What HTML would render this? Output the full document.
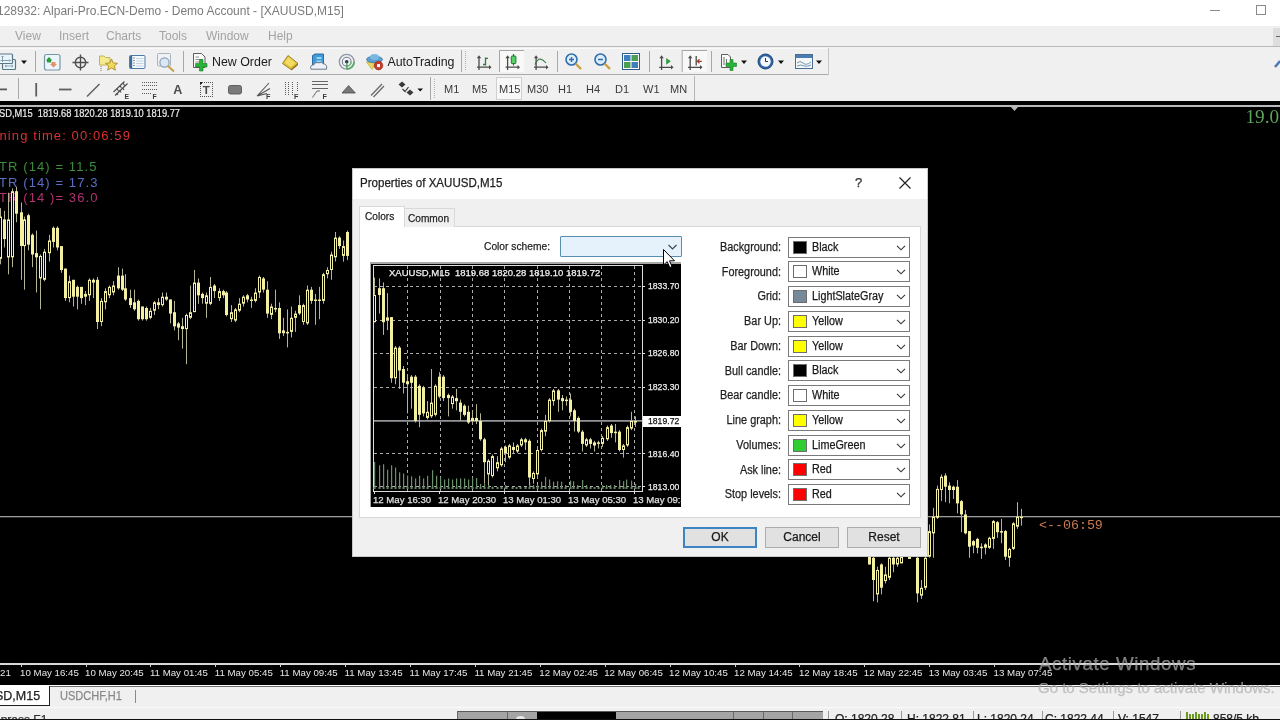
<!DOCTYPE html>
<html><head><meta charset="utf-8">
<style>
*{margin:0;padding:0;box-sizing:border-box}
html,body{width:1280px;height:720px;overflow:hidden;background:#f0f0f0;font-family:"Liberation Sans",sans-serif}
.a{position:absolute}
#root div{-webkit-text-stroke:0.25px currentColor}
#chart div,#root .mi,#root .tf,#title div{-webkit-text-stroke:0}
#chart .hdr{-webkit-text-stroke:0.2px currentColor}
.t{position:absolute;white-space:pre;line-height:1}
#title{left:0;top:0;width:1280px;height:26px;background:#fff}
#menu{left:0;top:26px;width:1280px;height:21px;background:#f0f0f0;border-bottom:1px solid #b8b8b8}
.mi{position:absolute;top:30px;font-size:12px;color:#a3a3a3;white-space:pre;line-height:1}
#tb1{left:0;top:47px;width:1280px;height:28px;background:#f0f0f0}
#tb2{left:0;top:75px;width:1280px;height:26px;background:#f0f0f0}
.sep{position:absolute;width:1px;background:#a5a5a5}
.ic{position:absolute}
.tf{position:absolute;top:84px;font-size:11px;color:#3a3a3a;white-space:pre;line-height:1}
#chart{left:0;top:101px;width:1280px;height:584px;background:#000;overflow:hidden}
.tk{position:absolute;top:562px;width:1px;height:4px;background:#d0d0d0}
.tl{position:absolute;top:567px;font-size:9.7px;color:#e6e6e6;white-space:pre;line-height:1}
#dlg{left:352px;top:168px;width:576px;height:389px;background:#f0f0f0;border:1px solid #c8c8c8}
.lbl{position:absolute;font-size:12.5px;color:#1e1e1e;white-space:pre;line-height:1;text-align:right;transform:scaleX(0.87);transform-origin:100% 0}
.dd{position:absolute;left:788px;width:122px;height:21px;background:#fff;border:1px solid #7a7a7a}
.sw{position:absolute;left:4px;top:3px;width:13.5px;height:13px;border:1px solid #6e6e6e}
.ddt{position:absolute;left:22.5px;top:3.3px;font-size:12px;color:#1a1a1a;white-space:pre;line-height:1;transform:scaleX(0.9);transform-origin:0 0}
.chev{position:absolute;right:3.5px;top:7px}
.btn{position:absolute;top:527px;width:74px;height:21px;background:#e1e1e1;border:1px solid #adadad;font-size:12px;color:#1a1a1a;text-align:center;line-height:19px}
.pl{position:absolute;left:648px;font-size:9.3px;color:#ededed;white-space:pre;line-height:1;transform:scaleX(0.93);transform-origin:0 0}
.ptl{position:absolute;top:495px;font-size:9.6px;color:#e0e0e0;white-space:pre;line-height:1}
</style></head><body><div id="root" style="position:absolute;left:0;top:0;width:1280px;height:720px;overflow:hidden;will-change:transform">
<!-- title bar -->
<div id="title" class="a">
  <div class="t" style="left:-3px;top:5px;font-size:12px;color:#7b7b7b">128932: Alpari-Pro.ECN-Demo - Demo Account - [XAUUSD,M15]</div>
  <div class="a" style="left:1210px;top:10px;width:10px;height:1px;background:#8a8a8a"></div>
  <div class="a" style="left:1256px;top:5px;width:10px;height:10px;border:1px solid #8a8a8a"></div>
</div>
<!-- menu -->
<div id="menu" class="a"></div>
<div class="mi" style="left:15px">View</div>
<div class="mi" style="left:59px">Insert</div>
<div class="mi" style="left:106px">Charts</div>
<div class="mi" style="left:159px">Tools</div>
<div class="mi" style="left:206px">Window</div>
<div class="mi" style="left:268px">Help</div>
<div class="a" style="left:1273px;top:28px;width:7px;height:18px;background:#dedede"></div>
<div class="a" style="left:1276px;top:36px;width:4px;height:1px;background:#666"></div>
<!-- toolbars -->
<div id="tb1" class="a"></div>
<div id="tb2" class="a"></div>
<div class="a" style="left:0;top:48px;width:828px;height:1px;background:#fafafa"></div>
<div class="a" style="left:0;top:74px;width:828px;height:1px;background:#a9a9a9"></div>
<div class="a" style="left:828px;top:48px;width:1px;height:27px;background:#c4c4c4"></div>
<div class="a" style="left:694px;top:76px;width:1px;height:25px;background:#b5b5b5"></div>
<svg class="a" style="left:0;top:0" width="1280" height="101" viewBox="0 0 1280 101">
<!-- separators tb1 -->
<g fill="#a8a8a8">
<rect x="35" y="51" width="1" height="21"/><rect x="183" y="51" width="1" height="21"/><rect x="461" y="50" width="1" height="22"/>
<rect x="557" y="51" width="1" height="21"/><rect x="649" y="51" width="1" height="21"/><rect x="711" y="51" width="1" height="21"/>
<rect x="18" y="78" width="1" height="21"/><rect x="430" y="77" width="1" height="23"/>
</g>
<g fill="#b0b0b0">
<rect x="465" y="51" width="1" height="1"/><rect x="465" y="53" width="1" height="1"/><rect x="465" y="55" width="1" height="1"/><rect x="465" y="57" width="1" height="1"/><rect x="465" y="59" width="1" height="1"/><rect x="465" y="61" width="1" height="1"/><rect x="465" y="63" width="1" height="1"/><rect x="465" y="65" width="1" height="1"/><rect x="465" y="67" width="1" height="1"/><rect x="465" y="69" width="1" height="1"/>
<rect x="434" y="79" width="1" height="1"/><rect x="434" y="81" width="1" height="1"/><rect x="434" y="83" width="1" height="1"/><rect x="434" y="85" width="1" height="1"/><rect x="434" y="87" width="1" height="1"/><rect x="434" y="89" width="1" height="1"/><rect x="434" y="91" width="1" height="1"/><rect x="434" y="93" width="1" height="1"/><rect x="434" y="95" width="1" height="1"/><rect x="434" y="97" width="1" height="1"/>
</g>
<!-- 1: windows icon (partial) -->
<rect x="2.5" y="59.5" width="13" height="10" rx="1" fill="#e6f4fa" stroke="#5a7686" stroke-width="1.2"/>
<path d="M5 66 H13 M5 66 L6.5 65 M5 66 L6.5 67 M13 66 L11.5 65 M13 66 L11.5 67" stroke="#7a96a6" stroke-width="0.8" fill="none"/>
<rect x="-3" y="54" width="15.5" height="9.5" rx="1" fill="#e8f6fc" stroke="#5a7686" stroke-width="1.2"/>
<path d="M2.5 56 V62 M0.5 60.5 H10.5 M1.5 57 L2.5 56 L3.5 57 M9.5 59.5 L10.5 60.5 L9.5 61.5" stroke="#7a96a6" stroke-width="0.9" fill="none"/>
<path d="M21 60.5 H27 L24 64 Z" fill="#111"/>
<!-- 2: green/orange box -->
<rect x="44.5" y="54.5" width="15.5" height="15.5" rx="2" fill="#eaf6fb" stroke="#7a96ab" stroke-width="1.2"/>
<path d="M49 57 L52.5 60.5 L51 60.5 L51 62.5 L47 62.5 L47 60.5 L45.8 60.5 Z" fill="#2f9a3a"/>
<path d="M51.5 62 L55.5 62 L55.5 64 L57 64 L53.5 67.5 L50 64 L51.5 64 Z" fill="#e8906e"/>
<!-- 3: crosshair -->
<g stroke="#4e4e4e" stroke-width="1.4" fill="none"><circle cx="80.5" cy="62.5" r="5.2"/><path d="M80.5 54.5 V70.5 M72.5 62.5 H88.5"/></g>
<!-- 4: folder star -->
<path d="M99.5 56 H104 L105.5 57.5 H110 V65 H99.5 Z" fill="#f4ea90" stroke="#c6b25a" stroke-width="1"/>
<path d="M111.5 59 L113.3 63 L117.5 63.3 L114.3 66 L115.4 70.2 L111.5 67.9 L107.6 70.2 L108.7 66 L105.5 63.3 L109.7 63 Z" fill="#f2d95a" stroke="#a88a2a" stroke-width="0.9"/>
<path d="M101 66 V71" stroke="#777" stroke-width="1" stroke-dasharray="1,1"/>
<!-- 5: list window -->
<rect x="129.5" y="55.5" width="15.5" height="13" rx="1" fill="#f4f9fd" stroke="#4f7aa6" stroke-width="1"/>
<rect x="130" y="56" width="2.2" height="12.5" fill="#3f6a9a"/>
<path d="M133.5 58 H134.5 M133.5 60.5 H134.5 M133.5 63 H134.5 M133.5 65.5 H134.5" stroke="#333" stroke-width="1"/>
<path d="M136 58.5 H143.5 M136 61 H143.5 M136 63.5 H143.5 M136 66 H143.5" stroke="#b6c8da" stroke-width="0.8"/>
<!-- 6: mag -->
<rect x="157.5" y="53.5" width="13" height="12.5" rx="1" fill="#eef2f6" stroke="#aab4bc" stroke-width="1"/>
<circle cx="164.5" cy="62.5" r="4.6" fill="#dbe8f2" stroke="#8aa0b6" stroke-width="1.2"/>
<path d="M168 66 L174 71.5" stroke="#c9a04a" stroke-width="2"/>
<!-- 7: new order -->
<path d="M193.5 53.5 H201.5 L205 57 V67.5 H193.5 Z" fill="#fafafa" stroke="#5d5d5d" stroke-width="1"/>
<path d="M195.5 57 H199 M195.5 59.5 H203 M195.5 62 H201" stroke="#777" stroke-width="0.8"/>
<path d="M195.5 63.5 H199.5 V59.5 H203 V63.5 H207 V67 H203 V71 H199.5 V67 H195.5 Z" fill="#2ab33a" stroke="#1b7a25" stroke-width="0.6"/>
<text x="212" y="65.5" font-family="Liberation Sans" font-size="12.4" fill="#1b1b1b">New Order</text>
<!-- 8: eraser -->
<path d="M282.5 63.5 L288 55.5 L298 63.5 L291 69.5 Z" fill="#e2c23a" stroke="#9a7418" stroke-width="0.9"/>
<path d="M284.5 62.5 L288.3 57 L295.5 62.8 L290.8 67 Z" fill="#f2dc64"/>
<path d="M291 69.5 L298 63.5 L298 65 L291.5 70.5 Z" fill="#8a6a18"/>
<!-- 9: server cloud -->
<path d="M312.5 55.5 L315 54 H323.5 V64.5 H312.5 Z" fill="#3f9ad8" stroke="#24609a" stroke-width="0.9"/>
<rect x="316.5" y="57" width="5" height="2" fill="#9ad2f2"/><rect x="316.5" y="60.5" width="5" height="2" fill="#9ad2f2"/>
<path d="M311 69.2 Q309.5 65 313.5 65 Q315 61.8 319 62.8 Q321.5 61.5 323.5 63.8 Q327.5 64 326.5 69.2 Z" fill="#eef2f8" stroke="#5a6a7c" stroke-width="0.9"/>
<!-- 10: signal -->
<g fill="none"><circle cx="346.7" cy="61.7" r="7.4" stroke="#8c98aa" stroke-width="1.3"/><circle cx="346.7" cy="61.7" r="4.4" stroke="#7a8698" stroke-width="1.1"/>
<path d="M354.1 61.7 A7.4 7.4 0 0 1 346.7 69.1" stroke="#5aaa68" stroke-width="1.8"/><path d="M351.1 61.7 A4.4 4.4 0 0 1 346.7 66.1" stroke="#6aba78" stroke-width="1.3"/></g>
<circle cx="346.7" cy="61.7" r="1.8" fill="#2a3a50"/>
<path d="M346.9 62.5 V69" stroke="#4a9a58" stroke-width="1.3"/>
<!-- 11: autotrading -->
<path d="M366.5 62 L376 62 L372 69.5 Z" fill="#e8d860" stroke="#b0a030" stroke-width="0.6"/>
<ellipse cx="374.5" cy="59.5" rx="8" ry="3.3" fill="#5a9ed2" stroke="#3a6a9a" stroke-width="0.7"/>
<ellipse cx="374.5" cy="57" rx="4.5" ry="3" fill="#7ab8e4"/>
<circle cx="378.5" cy="65.6" r="4.3" fill="#c83a28" stroke="#8a2a1a" stroke-width="0.6"/>
<rect x="377" y="64.1" width="3" height="3" fill="#fff"/>
<text x="387.4" y="65.5" font-family="Liberation Sans" font-size="12.4" fill="#1b1b1b">AutoTrading</text>
<!-- 12: bar chart -->
<g stroke="#4a4a4a" stroke-width="1.3" fill="none"><path d="M479 57 V70 M477 67.2 H489.5"/></g>
<path d="M476.8 58.2 L479 55.3 L481.2 58.2 Z M489 65 L491.5 67.2 L489 69.4 Z" fill="#4a4a4a"/>
<path d="M485.5 57.5 V65.5 M485.5 58.3 H488 M483 64.5 H485.5" stroke="#2e7a3a" stroke-width="1.3" fill="none"/>
<!-- 13: candles pressed -->
<rect x="499" y="50" width="25" height="22" fill="#f8f8f8"/>
<path d="M499.5 72 V50.5 H524" stroke="#a5a5a5" stroke-width="1" fill="none"/>
<g stroke="#4a4a4a" stroke-width="1.3" fill="none"><path d="M507.6 57 V70 M505.6 67.2 H518"/></g>
<path d="M505.4 58.2 L507.6 55.3 L509.8 58.2 Z M517.5 65 L520 67.2 L517.5 69.4 Z" fill="#4a4a4a"/>
<path d="M513.5 54 V65.5" stroke="#1f7a2a" stroke-width="1.2"/>
<rect x="511.3" y="56" width="4.6" height="7.6" rx="0.8" fill="#5ad06a" stroke="#1f7a2a" stroke-width="1"/>
<!-- 14: line chart -->
<g stroke="#4a4a4a" stroke-width="1.3" fill="none"><path d="M536.1 57 V70 M534 67.2 H546.5"/></g>
<path d="M533.9 58.2 L536.1 55.3 L538.3 58.2 Z M546 65 L548.5 67.2 L546 69.4 Z" fill="#4a4a4a"/>
<path d="M535 64.5 Q537.5 59 540.3 59 Q543 59.5 546 63" stroke="#2e7a3a" stroke-width="1.1" fill="none"/>
<!-- 15: zoom in -->
<circle cx="571.5" cy="59.5" r="5.5" fill="#dcecf8" stroke="#2f6fae" stroke-width="1.6"/>
<path d="M569 59.5 H574 M571.5 57 V62" stroke="#2f6fae" stroke-width="1.5"/>
<path d="M575.5 63.5 L581 69" stroke="#c8a040" stroke-width="2.4"/>
<!-- 16: zoom out -->
<circle cx="600.5" cy="59.5" r="5.5" fill="#dcecf8" stroke="#2f6fae" stroke-width="1.6"/>
<path d="M598 59.5 H603" stroke="#2f6fae" stroke-width="1.5"/>
<path d="M604.5 63.5 L610 69" stroke="#c8a040" stroke-width="2.4"/>
<!-- 17: tile -->
<rect x="622.5" y="53.5" width="17" height="16" fill="#fff" stroke="#2e5a86" stroke-width="1"/>
<rect x="624" y="55" width="6.5" height="6" fill="#3f7fc0"/><rect x="631.5" y="55" width="6.5" height="6" fill="#48a050"/>
<rect x="624" y="62" width="6.5" height="6" fill="#48a050"/><rect x="631.5" y="62" width="6.5" height="6" fill="#3f7fc0"/>
<!-- 18: chart shift -->
<g stroke="#4a4a4a" stroke-width="1.3" fill="none"><path d="M661.6 57 V70 M659.2 67.3 H671.5"/></g>
<path d="M659.4 58.2 L661.6 55.3 L663.8 58.2 Z M671 65.1 L673.5 67.3 L671 69.5 Z" fill="#4a4a4a"/>
<path d="M666.2 57.9 L670.8 61.3 L666.2 64.7 Z" fill="#2e9a3e"/>
<!-- 19: autoscroll pressed -->
<rect x="682" y="50" width="25" height="22" fill="#f8f8f8"/>
<path d="M682.2 72 V50.5 H707" stroke="#a5a5a5" stroke-width="1" fill="none"/>
<g stroke="#4a4a4a" stroke-width="1.3" fill="none"><path d="M690.2 57 V70 M688 67.3 H700.5 M696.2 56 V65.6"/></g>
<path d="M688 58.2 L690.2 55.3 L692.4 58.2 Z M700 65.1 L702.5 67.3 L700 69.5 Z" fill="#4a4a4a"/>
<path d="M701.8 61.3 H697.5 M699.5 59.3 L697.3 61.3 L699.5 63.3" stroke="#a83a2a" stroke-width="1.2" fill="none"/>
<!-- 20: add indicator -->
<path d="M721.5 54.5 H728 L730.5 57 V67.5 H721.5 Z" fill="#fafafa" stroke="#5d5d5d" stroke-width="1"/>
<path d="M724 57 V65 M726.5 59 V65" stroke="#5d5d5d" stroke-width="0.9"/>
<path d="M726 63 H730 V59.5 H733 V63 H736.5 V66.5 H733 V70.5 H730 V66.5 H726 Z" fill="#2ab33a" stroke="#1b7a25" stroke-width="0.6"/>
<path d="M741 60.5 H747 L744 64 Z" fill="#111"/>
<!-- 21: clock -->
<circle cx="765.5" cy="61.5" r="7.5" fill="#2f64a8" stroke="#1e4474" stroke-width="1"/>
<circle cx="765.5" cy="61.5" r="5.2" fill="#f4f8fc"/>
<path d="M765.5 58 V61.5 H768" stroke="#333" stroke-width="1" fill="none"/>
<path d="M778 60.5 H784 L781 64 Z" fill="#111"/>
<!-- 22: template -->
<rect x="795.5" y="54.5" width="17" height="14" fill="#f4f8fb" stroke="#4a6e92" stroke-width="1"/>
<rect x="796" y="55" width="16" height="3" fill="#4a7eb2"/>
<path d="M797 63 Q800 60 803 63 Q806 66 811 62 M797 66 Q801 64 804 66 Q807 67 811 65" stroke="#6a8aa6" stroke-width="0.9" fill="none"/>
<path d="M816 60.5 H822 L819 64 Z" fill="#111"/>
<!-- right edge pencil -->
<path d="M1275 67 L1280 61" stroke="#4a7ab8" stroke-width="2.5"/>

<!-- toolbar 2 -->
<rect x="0" y="88.5" width="7" height="1.8" fill="#5a5a5a"/>
<rect x="35.3" y="83" width="1.8" height="13.5" fill="#5e5e5e"/>
<rect x="59" y="88.6" width="12.5" height="1.8" fill="#5e5e5e"/>
<path d="M87 96.5 L99.5 84" stroke="#5e5e5e" stroke-width="1.4"/>
<!-- channel E -->
<g stroke="#4a4a4a" stroke-width="1.1" fill="none"><path d="M113.5 92 L124.5 81.5 M115 95.5 L127.5 83.5 M117 88.5 L118.5 91 M120 85.5 L121.5 88 M123 83 L124.5 85.5 M116.5 93 L118 95 M119.5 90 L121 92.5 M122.5 87.5 L124 90"/></g>
<text x="124.5" y="98.8" font-family="Liberation Sans" font-weight="bold" font-size="6.8" fill="#3a3a3a">E</text>
<!-- fib F -->
<g stroke="#5a5a5a" stroke-width="1" stroke-dasharray="1,1"><path d="M142 82.5 H157 M142 85.5 H157 M142 89.5 H157 M142 93.5 H152"/></g>
<text x="152.5" y="98.8" font-family="Liberation Sans" font-weight="bold" font-size="6.8" fill="#3a3a3a">F</text>
<!-- A -->
<text x="173.3" y="94" font-family="Liberation Sans" font-weight="bold" font-size="12.5" fill="#4a4a4a">A</text>
<!-- T box -->
<g stroke="#555" stroke-width="1" stroke-dasharray="1,1" fill="none"><path d="M200 82.5 H213 M200 96.5 H213 M200.5 82 V97 M212.5 82 V97"/></g>
<rect x="200" y="82" width="2" height="2" fill="#222"/>
<text x="202.8" y="94" font-family="Liberation Sans" font-weight="bold" font-size="11.5" fill="#4a4a4a">T</text>
<!-- rect -->
<rect x="228.5" y="85.5" width="13" height="8.5" rx="2" fill="#7a7a7a" stroke="#555" stroke-width="0.9"/>
<!-- fan F -->
<g stroke="#555" stroke-width="1.1" fill="none"><path d="M257 96 L269 83 M257 96 L270 88.5 M257 96 L267 93.5"/></g>
<text x="266" y="98.5" font-family="Liberation Sans" font-weight="bold" font-size="7.2" fill="#3a3a3a">F</text>
<!-- vertical lines F -->
<g stroke="#5a5a5a" stroke-width="1" stroke-dasharray="1,1"><path d="M285.5 82 V96 M288.5 82 V96 M292.5 82 V96 M297.5 82 V92"/></g>
<text x="294" y="98.5" font-family="Liberation Sans" font-weight="bold" font-size="7.2" fill="#3a3a3a">F</text>
<!-- curve F -->
<g stroke="#666" stroke-width="1" fill="none"><path d="M312 81.5 H328 M312 84.5 H328 M312 88.5 H328"/><path d="M312.5 97.5 L317 91 H320"/></g>
<text x="322.5" y="98.5" font-family="Liberation Sans" font-weight="bold" font-size="7.2" fill="#3a3a3a">F</text>
<!-- triangle -->
<path d="M342 93 L348.6 85.6 L355.3 93 Z" fill="#787878" stroke="#4a4a4a" stroke-width="0.8"/>
<!-- double line -->
<path d="M371 95.5 L382 84 M373.5 97 L384 86" stroke="#6a6a6a" stroke-width="1.3"/>
<!-- arrows -->
<path d="M398.5 84.5 L402 81.5 L405.5 84.5 L402 87.5 Z M406.5 92.5 L410 89.5 L413.5 92.5 L410 95.5 Z" fill="#3a3a3a"/>
<path d="M402.5 89 L405 91.5 L408.5 87" stroke="#3a3a3a" stroke-width="1.2" fill="none"/>
<path d="M417.5 88.5 H423 L420.2 91.5 Z" fill="#111"/>
</svg>

<div class="tf" style="left:444px">M1</div>
<div class="tf" style="left:472px">M5</div>
<div class="a" style="left:496px;top:77px;width:26px;height:23px;background:#f8f8f8;border:1px solid #cfcfcf"></div>
<div class="tf" style="left:499px">M15</div>
<div class="tf" style="left:527px">M30</div>
<div class="tf" style="left:558px">H1</div>
<div class="tf" style="left:586px">H4</div>
<div class="tf" style="left:615px">D1</div>
<div class="tf" style="left:643px">W1</div>
<div class="tf" style="left:670px">MN</div>

<!-- chart -->
<div id="chart" class="a">
  <div class="a" style="left:0;top:4px;width:1280px;height:2px;background:#b9b9b9"></div>
  
  <div class="a" style="left:0;top:562px;width:1280px;height:1.5px;background:#d8d8d8"></div>
  <div class="tk" style="left:20.6px"></div><div class="tl" style="left:20.1px">10 May 16:45</div><div class="tk" style="left:85.5px"></div><div class="tl" style="left:85.0px">10 May 20:45</div><div class="tk" style="left:150.4px"></div><div class="tl" style="left:149.9px">11 May 01:45</div><div class="tk" style="left:215.3px"></div><div class="tl" style="left:214.8px">11 May 05:45</div><div class="tk" style="left:280.2px"></div><div class="tl" style="left:279.7px">11 May 09:45</div><div class="tk" style="left:345.1px"></div><div class="tl" style="left:344.6px">11 May 13:45</div><div class="tk" style="left:410.0px"></div><div class="tl" style="left:409.5px">11 May 17:45</div><div class="tk" style="left:474.9px"></div><div class="tl" style="left:474.4px">11 May 21:45</div><div class="tk" style="left:539.8px"></div><div class="tl" style="left:539.3px">12 May 02:45</div><div class="tk" style="left:604.7px"></div><div class="tl" style="left:604.2px">12 May 06:45</div><div class="tk" style="left:669.6px"></div><div class="tl" style="left:669.1px">12 May 10:45</div><div class="tk" style="left:734.5px"></div><div class="tl" style="left:734.0px">12 May 14:45</div><div class="tk" style="left:799.4px"></div><div class="tl" style="left:798.9px">12 May 18:45</div><div class="tk" style="left:864.3px"></div><div class="tl" style="left:863.8px">12 May 22:45</div><div class="tk" style="left:929.2px"></div><div class="tl" style="left:928.7px">13 May 03:45</div><div class="tk" style="left:994.1px"></div><div class="tl" style="left:993.6px">13 May 07:45</div><div class="tl" style="left:0px">21</div>
  <div class="t hdr" style="left:-1px;top:8.3px;font-size:10px;color:#ececec;transform:scaleX(0.93);transform-origin:0 0">SD,M15  1819.68 1820.28 1819.10 1819.77</div>
  <div class="t" style="left:-0.5px;top:28.1px;font-size:13px;letter-spacing:1.1px;color:#d83232">ning time: 00:06:59</div>
  <div class="t" style="left:-1px;top:58.5px;font-size:13px;letter-spacing:1.1px;color:#3c8c3c">TR (14) = 11.5</div>
  <div class="t" style="left:-1px;top:74.5px;font-size:13px;letter-spacing:1.1px;color:#5b6fc4">TR (14) = 17.3</div>
  <div class="t" style="left:-1px;top:89.5px;font-size:13px;letter-spacing:1.1px;color:#b03270">TR (14 )= 36.0</div>
  <div class="t" style="left:1039px;top:418px;font-family:'Liberation Mono';font-size:13.3px;color:#c87a52">&lt;--06:59</div>
  <div class="t" style="left:1245.5px;top:6.3px;font-family:'Liberation Serif';font-size:19.2px;color:#5ca45c">19.0</div>
<svg class="a" style="left:0;top:-101px" width="1280" height="685" viewBox="0 0 1280 685">
    <rect x="0" y="516" width="1280" height="1.3" fill="#9c9c9c"/>
    <polygon points="1010,106 1019,106 1014.5,111" fill="#b8b8b8"/>
    <rect x="0" y="208.1" width="1" height="56.2" fill="#b4b394"/><rect x="-0.5" y="217.1" width="2.0" height="41.2" fill="#000" stroke="#f3f0a2" stroke-width="1"/><rect x="4" y="210.9" width="1" height="36.6" fill="#b4b394"/><rect x="3" y="219.4" width="3.0" height="19.7" fill="#f3f0a2"/><rect x="8" y="192.7" width="1" height="81.6" fill="#b4b394"/><rect x="7.5" y="219.9" width="2.0" height="37.0" fill="#000" stroke="#f3f0a2" stroke-width="1"/><rect x="12" y="188.4" width="1" height="78.7" fill="#b4b394"/><rect x="11.5" y="191.7" width="2.0" height="65.1" fill="#000" stroke="#f3f0a2" stroke-width="1"/><rect x="16" y="187.0" width="1" height="35.2" fill="#b4b394"/><rect x="15" y="191.2" width="3.0" height="22.5" fill="#f3f0a2"/><rect x="21" y="202.5" width="1" height="77.3" fill="#b4b394"/><rect x="20" y="212.3" width="3.0" height="33.7" fill="#f3f0a2"/><rect x="24" y="216.6" width="1" height="73.1" fill="#b4b394"/><rect x="23.5" y="219.9" width="2.0" height="25.7" fill="#000" stroke="#f3f0a2" stroke-width="1"/><rect x="28" y="213.7" width="1" height="36.6" fill="#b4b394"/><rect x="27" y="215.2" width="3.0" height="29.5" fill="#f3f0a2"/><rect x="32" y="233.4" width="1" height="33.7" fill="#b4b394"/><rect x="31" y="234.8" width="3.0" height="19.7" fill="#f3f0a2"/><rect x="36" y="230.6" width="1" height="61.9" fill="#b4b394"/><rect x="35" y="253.1" width="3.0" height="4.2" fill="#f3f0a2"/><rect x="40" y="254.5" width="1" height="54.8" fill="#b4b394"/><rect x="39.5" y="256.4" width="2.0" height="21.5" fill="#000" stroke="#f3f0a2" stroke-width="1"/><rect x="44" y="248.9" width="1" height="32.3" fill="#b4b394"/><rect x="43.5" y="252.2" width="2.0" height="27.1" fill="#000" stroke="#f3f0a2" stroke-width="1"/><rect x="49" y="234.8" width="1" height="26.7" fill="#b4b394"/><rect x="48.5" y="241.0" width="2.0" height="11.7" fill="#000" stroke="#f3f0a2" stroke-width="1"/><rect x="53" y="226.4" width="1" height="21.1" fill="#b4b394"/><rect x="52" y="227.8" width="3.0" height="14.1" fill="#f3f0a2"/><rect x="57" y="226.4" width="1" height="23.9" fill="#b4b394"/><rect x="56" y="227.8" width="3.0" height="19.7" fill="#f3f0a2"/><rect x="61" y="246.1" width="1" height="26.7" fill="#b4b394"/><rect x="60" y="246.1" width="3.0" height="23.9" fill="#f3f0a2"/><rect x="65" y="268.6" width="1" height="32.3" fill="#b4b394"/><rect x="64" y="268.6" width="3.0" height="29.5" fill="#f3f0a2"/><rect x="69" y="275.6" width="1" height="26.7" fill="#b4b394"/><rect x="68.5" y="281.7" width="2.0" height="15.9" fill="#000" stroke="#f3f0a2" stroke-width="1"/><rect x="73" y="279.8" width="1" height="26.7" fill="#b4b394"/><rect x="72" y="279.8" width="3.0" height="16.9" fill="#f3f0a2"/><rect x="77" y="285.5" width="1" height="23.9" fill="#b4b394"/><rect x="76" y="286.9" width="3.0" height="9.8" fill="#f3f0a2"/><rect x="81" y="286.9" width="1" height="16.9" fill="#b4b394"/><rect x="80" y="286.9" width="3.0" height="11.2" fill="#f3f0a2"/><rect x="85" y="291.1" width="1" height="14.1" fill="#b4b394"/><rect x="84" y="293.9" width="3.0" height="2.8" fill="#f3f0a2"/><rect x="89" y="278.4" width="1" height="22.5" fill="#b4b394"/><rect x="88.5" y="280.3" width="2.0" height="14.5" fill="#000" stroke="#f3f0a2" stroke-width="1"/><rect x="93" y="278.4" width="1" height="19.7" fill="#b4b394"/><rect x="92" y="279.8" width="3.0" height="2.8" fill="#f3f0a2"/><rect x="97" y="277.0" width="1" height="52.0" fill="#b4b394"/><rect x="96" y="279.8" width="3.0" height="42.2" fill="#f3f0a2"/><rect x="101" y="298.1" width="1" height="28.1" fill="#b4b394"/><rect x="100.5" y="301.4" width="2.0" height="20.1" fill="#000" stroke="#f3f0a2" stroke-width="1"/><rect x="105" y="288.3" width="1" height="21.1" fill="#b4b394"/><rect x="104.5" y="291.6" width="2.0" height="10.2" fill="#000" stroke="#f3f0a2" stroke-width="1"/><rect x="109" y="285.5" width="1" height="12.7" fill="#b4b394"/><rect x="108.5" y="287.4" width="2.0" height="7.4" fill="#000" stroke="#f3f0a2" stroke-width="1"/><rect x="113" y="281.2" width="1" height="14.1" fill="#b4b394"/><rect x="112.5" y="286.0" width="2.0" height="6.0" fill="#000" stroke="#f3f0a2" stroke-width="1"/><rect x="118" y="267.2" width="1" height="22.5" fill="#b4b394"/><rect x="117" y="275.6" width="3.0" height="12.7" fill="#f3f0a2"/><rect x="122" y="268.6" width="1" height="22.5" fill="#b4b394"/><rect x="121" y="275.6" width="3.0" height="14.1" fill="#f3f0a2"/><rect x="125" y="274.2" width="1" height="26.7" fill="#b4b394"/><rect x="124" y="288.3" width="3.0" height="11.2" fill="#f3f0a2"/><rect x="130" y="289.7" width="1" height="18.3" fill="#b4b394"/><rect x="129" y="298.1" width="3.0" height="7.0" fill="#f3f0a2"/><rect x="134" y="289.7" width="1" height="21.1" fill="#b4b394"/><rect x="133" y="302.3" width="3.0" height="7.0" fill="#f3f0a2"/><rect x="138" y="299.5" width="1" height="21.1" fill="#b4b394"/><rect x="137" y="300.9" width="3.0" height="18.3" fill="#f3f0a2"/><rect x="142" y="306.5" width="1" height="14.1" fill="#b4b394"/><rect x="141" y="306.5" width="3.0" height="12.7" fill="#f3f0a2"/><rect x="146" y="306.5" width="1" height="14.1" fill="#b4b394"/><rect x="145" y="308.0" width="3.0" height="11.2" fill="#f3f0a2"/><rect x="150" y="308.0" width="1" height="11.2" fill="#b4b394"/><rect x="149.5" y="311.3" width="2.0" height="6.0" fill="#000" stroke="#f3f0a2" stroke-width="1"/><rect x="154" y="300.9" width="1" height="14.1" fill="#b4b394"/><rect x="153.5" y="302.8" width="2.0" height="7.4" fill="#000" stroke="#f3f0a2" stroke-width="1"/><rect x="158" y="298.1" width="1" height="11.2" fill="#b4b394"/><rect x="157" y="302.3" width="3.0" height="2.8" fill="#f3f0a2"/><rect x="162" y="292.5" width="1" height="14.1" fill="#b4b394"/><rect x="161.5" y="297.2" width="2.0" height="7.4" fill="#000" stroke="#f3f0a2" stroke-width="1"/><rect x="166" y="292.5" width="1" height="8.4" fill="#b4b394"/><rect x="165" y="296.7" width="3.0" height="2.8" fill="#f3f0a2"/><rect x="170" y="299.5" width="1" height="23.9" fill="#b4b394"/><rect x="169" y="299.5" width="3.0" height="14.1" fill="#f3f0a2"/><rect x="174" y="300.9" width="1" height="29.5" fill="#b4b394"/><rect x="173" y="312.2" width="3.0" height="14.1" fill="#f3f0a2"/><rect x="178" y="322.0" width="1" height="18.3" fill="#b4b394"/><rect x="177" y="323.4" width="3.0" height="4.2" fill="#f3f0a2"/><rect x="182" y="317.8" width="1" height="30.9" fill="#b4b394"/><rect x="181" y="326.2" width="3.0" height="2.8" fill="#f3f0a2"/><rect x="186" y="313.6" width="1" height="50.6" fill="#b4b394"/><rect x="185.5" y="315.5" width="2.0" height="13.1" fill="#000" stroke="#f3f0a2" stroke-width="1"/><rect x="190" y="285.5" width="1" height="33.7" fill="#b4b394"/><rect x="189.5" y="312.7" width="2.0" height="4.6" fill="#000" stroke="#f3f0a2" stroke-width="1"/><rect x="194" y="270.0" width="1" height="42.2" fill="#b4b394"/><rect x="193.5" y="283.1" width="2.0" height="28.5" fill="#000" stroke="#f3f0a2" stroke-width="1"/><rect x="198" y="278.4" width="1" height="25.3" fill="#b4b394"/><rect x="197" y="282.6" width="3.0" height="12.7" fill="#f3f0a2"/><rect x="202" y="292.5" width="1" height="11.2" fill="#b4b394"/><rect x="201" y="293.9" width="3.0" height="4.2" fill="#f3f0a2"/><rect x="206" y="292.5" width="1" height="25.3" fill="#b4b394"/><rect x="205.5" y="295.8" width="2.0" height="7.4" fill="#000" stroke="#f3f0a2" stroke-width="1"/><rect x="210" y="277.0" width="1" height="28.1" fill="#b4b394"/><rect x="209.5" y="287.4" width="2.0" height="15.9" fill="#000" stroke="#f3f0a2" stroke-width="1"/><rect x="214" y="284.0" width="1" height="14.1" fill="#b4b394"/><rect x="213" y="285.5" width="3.0" height="5.6" fill="#f3f0a2"/><rect x="219" y="288.3" width="1" height="12.7" fill="#b4b394"/><rect x="218.5" y="291.6" width="2.0" height="6.0" fill="#000" stroke="#f3f0a2" stroke-width="1"/><rect x="223" y="289.7" width="1" height="8.4" fill="#b4b394"/><rect x="222" y="291.1" width="3.0" height="4.2" fill="#f3f0a2"/><rect x="226" y="291.1" width="1" height="25.3" fill="#b4b394"/><rect x="225" y="292.5" width="3.0" height="22.5" fill="#f3f0a2"/><rect x="231" y="305.1" width="1" height="16.9" fill="#b4b394"/><rect x="230.5" y="312.7" width="2.0" height="6.0" fill="#000" stroke="#f3f0a2" stroke-width="1"/><rect x="235" y="308.0" width="1" height="14.1" fill="#b4b394"/><rect x="234.5" y="309.9" width="2.0" height="10.2" fill="#000" stroke="#f3f0a2" stroke-width="1"/><rect x="239" y="298.1" width="1" height="14.1" fill="#b4b394"/><rect x="238.5" y="304.2" width="2.0" height="6.0" fill="#000" stroke="#f3f0a2" stroke-width="1"/><rect x="243" y="295.3" width="1" height="11.2" fill="#b4b394"/><rect x="242.5" y="297.2" width="2.0" height="6.0" fill="#000" stroke="#f3f0a2" stroke-width="1"/><rect x="247" y="293.9" width="1" height="8.4" fill="#b4b394"/><rect x="246" y="295.3" width="3.0" height="4.2" fill="#f3f0a2"/><rect x="251" y="296.7" width="1" height="11.2" fill="#b4b394"/><rect x="250" y="299.5" width="3.0" height="1.5" fill="#f3f0a2"/><rect x="255" y="288.3" width="1" height="14.1" fill="#b4b394"/><rect x="254.5" y="293.0" width="2.0" height="7.4" fill="#000" stroke="#f3f0a2" stroke-width="1"/><rect x="259" y="275.6" width="1" height="22.5" fill="#b4b394"/><rect x="258.5" y="277.5" width="2.0" height="14.5" fill="#000" stroke="#f3f0a2" stroke-width="1"/><rect x="263" y="277.0" width="1" height="15.5" fill="#b4b394"/><rect x="262" y="278.4" width="3.0" height="11.2" fill="#f3f0a2"/><rect x="267" y="281.2" width="1" height="36.6" fill="#b4b394"/><rect x="266" y="289.7" width="3.0" height="23.9" fill="#f3f0a2"/><rect x="271" y="303.7" width="1" height="15.5" fill="#b4b394"/><rect x="270.5" y="307.0" width="2.0" height="7.4" fill="#000" stroke="#f3f0a2" stroke-width="1"/><rect x="275" y="289.7" width="1" height="22.5" fill="#b4b394"/><rect x="274" y="308.0" width="3.0" height="1.5" fill="#f3f0a2"/><rect x="279" y="302.3" width="1" height="36.6" fill="#b4b394"/><rect x="278" y="308.0" width="3.0" height="25.3" fill="#f3f0a2"/><rect x="283" y="317.8" width="1" height="18.3" fill="#b4b394"/><rect x="282" y="330.4" width="3.0" height="2.8" fill="#f3f0a2"/><rect x="287" y="309.4" width="1" height="38.0" fill="#b4b394"/><rect x="286" y="331.9" width="3.0" height="1.5" fill="#f3f0a2"/><rect x="291" y="306.5" width="1" height="30.9" fill="#b4b394"/><rect x="290.5" y="318.3" width="2.0" height="13.1" fill="#000" stroke="#f3f0a2" stroke-width="1"/><rect x="295" y="310.8" width="1" height="21.1" fill="#b4b394"/><rect x="294.5" y="314.1" width="2.0" height="3.2" fill="#000" stroke="#f3f0a2" stroke-width="1"/><rect x="299" y="295.3" width="1" height="19.7" fill="#b4b394"/><rect x="298" y="305.1" width="3.0" height="8.4" fill="#f3f0a2"/><rect x="303" y="303.7" width="1" height="21.1" fill="#b4b394"/><rect x="302.5" y="305.6" width="2.0" height="15.9" fill="#000" stroke="#f3f0a2" stroke-width="1"/><rect x="307" y="285.5" width="1" height="39.4" fill="#b4b394"/><rect x="306.5" y="290.2" width="2.0" height="32.7" fill="#000" stroke="#f3f0a2" stroke-width="1"/><rect x="311" y="286.9" width="1" height="16.9" fill="#b4b394"/><rect x="310" y="289.7" width="3.0" height="11.2" fill="#f3f0a2"/><rect x="315" y="293.9" width="1" height="30.9" fill="#b4b394"/><rect x="314" y="299.5" width="3.0" height="1.5" fill="#f3f0a2"/><rect x="319" y="286.9" width="1" height="32.3" fill="#b4b394"/><rect x="318" y="299.5" width="3.0" height="1.5" fill="#f3f0a2"/><rect x="323" y="272.8" width="1" height="30.9" fill="#b4b394"/><rect x="322.5" y="274.7" width="2.0" height="25.7" fill="#000" stroke="#f3f0a2" stroke-width="1"/><rect x="327" y="267.2" width="1" height="11.2" fill="#b4b394"/><rect x="326.5" y="270.5" width="2.0" height="3.2" fill="#000" stroke="#f3f0a2" stroke-width="1"/><rect x="331" y="251.7" width="1" height="28.1" fill="#b4b394"/><rect x="330.5" y="255.0" width="2.0" height="14.5" fill="#000" stroke="#f3f0a2" stroke-width="1"/><rect x="335" y="232.0" width="1" height="29.5" fill="#b4b394"/><rect x="334.5" y="238.1" width="2.0" height="18.7" fill="#000" stroke="#f3f0a2" stroke-width="1"/><rect x="339" y="236.2" width="1" height="12.7" fill="#b4b394"/><rect x="338" y="237.6" width="3.0" height="8.4" fill="#f3f0a2"/><rect x="343" y="240.5" width="1" height="21.1" fill="#b4b394"/><rect x="342.5" y="246.6" width="2.0" height="8.8" fill="#000" stroke="#f3f0a2" stroke-width="1"/><rect x="347" y="230.6" width="1" height="29.5" fill="#b4b394"/><rect x="346" y="232.0" width="3.0" height="23.9" fill="#f3f0a2"/><rect x="869" y="555.6" width="1" height="8.9" fill="#b4b394"/><rect x="868" y="555.6" width="3.0" height="8.9" fill="#f3f0a2"/><rect x="873" y="555.6" width="1" height="45.6" fill="#b4b394"/><rect x="872" y="557.8" width="3.0" height="22.2" fill="#f3f0a2"/><rect x="877" y="566.7" width="1" height="35.6" fill="#b4b394"/><rect x="876.5" y="570.5" width="2.0" height="23.4" fill="#000" stroke="#f3f0a2" stroke-width="1"/><rect x="881" y="563.3" width="1" height="31.1" fill="#b4b394"/><rect x="880" y="564.4" width="3.0" height="23.3" fill="#f3f0a2"/><rect x="885" y="566.7" width="1" height="16.7" fill="#b4b394"/><rect x="884.5" y="574.9" width="2.0" height="5.7" fill="#000" stroke="#f3f0a2" stroke-width="1"/><rect x="889" y="556.7" width="1" height="23.3" fill="#b4b394"/><rect x="888.5" y="558.3" width="2.0" height="19.0" fill="#000" stroke="#f3f0a2" stroke-width="1"/><rect x="893" y="556.7" width="1" height="15.6" fill="#b4b394"/><rect x="892" y="557.8" width="3.0" height="6.7" fill="#f3f0a2"/><rect x="897" y="556.7" width="1" height="10.0" fill="#b4b394"/><rect x="896.5" y="558.3" width="2.0" height="5.7" fill="#000" stroke="#f3f0a2" stroke-width="1"/><rect x="901" y="556.7" width="1" height="6.7" fill="#b4b394"/><rect x="900.5" y="557.2" width="2.0" height="5.7" fill="#000" stroke="#f3f0a2" stroke-width="1"/><rect x="909" y="556.7" width="1" height="2.2" fill="#b4b394"/><rect x="908" y="556.7" width="3.0" height="2.2" fill="#f3f0a2"/><rect x="917" y="556.7" width="1" height="45.6" fill="#b4b394"/><rect x="916" y="557.8" width="3.0" height="35.6" fill="#f3f0a2"/><rect x="921" y="580.0" width="1" height="18.9" fill="#b4b394"/><rect x="920.5" y="588.3" width="2.0" height="6.8" fill="#000" stroke="#f3f0a2" stroke-width="1"/><rect x="925" y="556.7" width="1" height="33.3" fill="#b4b394"/><rect x="924.5" y="558.3" width="2.0" height="29.0" fill="#000" stroke="#f3f0a2" stroke-width="1"/><rect x="929" y="524.4" width="1" height="33.3" fill="#b4b394"/><rect x="928.5" y="531.6" width="2.0" height="24.6" fill="#000" stroke="#f3f0a2" stroke-width="1"/><rect x="933" y="507.8" width="1" height="50.0" fill="#b4b394"/><rect x="932.5" y="517.2" width="2.0" height="15.7" fill="#000" stroke="#f3f0a2" stroke-width="1"/><rect x="937" y="485.6" width="1" height="33.3" fill="#b4b394"/><rect x="936.5" y="489.4" width="2.0" height="27.9" fill="#000" stroke="#f3f0a2" stroke-width="1"/><rect x="941" y="474.4" width="1" height="26.7" fill="#b4b394"/><rect x="940.5" y="477.2" width="2.0" height="12.3" fill="#000" stroke="#f3f0a2" stroke-width="1"/><rect x="945" y="473.3" width="1" height="28.9" fill="#b4b394"/><rect x="944" y="475.6" width="3.0" height="11.1" fill="#f3f0a2"/><rect x="949" y="482.2" width="1" height="21.1" fill="#b4b394"/><rect x="948" y="485.6" width="3.0" height="4.4" fill="#f3f0a2"/><rect x="953" y="485.6" width="1" height="13.3" fill="#b4b394"/><rect x="952" y="486.7" width="3.0" height="3.3" fill="#f3f0a2"/><rect x="957" y="480.0" width="1" height="33.3" fill="#b4b394"/><rect x="956" y="486.7" width="3.0" height="16.7" fill="#f3f0a2"/><rect x="961" y="500.0" width="1" height="32.2" fill="#b4b394"/><rect x="960" y="501.1" width="3.0" height="13.3" fill="#f3f0a2"/><rect x="965" y="510.0" width="1" height="24.4" fill="#b4b394"/><rect x="964" y="514.4" width="3.0" height="18.9" fill="#f3f0a2"/><rect x="969" y="531.1" width="1" height="26.7" fill="#b4b394"/><rect x="968" y="531.1" width="3.0" height="15.6" fill="#f3f0a2"/><rect x="973" y="540.0" width="1" height="13.3" fill="#b4b394"/><rect x="972" y="541.1" width="3.0" height="4.4" fill="#f3f0a2"/><rect x="977" y="537.8" width="1" height="15.6" fill="#b4b394"/><rect x="976" y="538.9" width="3.0" height="8.9" fill="#f3f0a2"/><rect x="981" y="543.3" width="1" height="15.6" fill="#b4b394"/><rect x="980" y="546.7" width="3.0" height="1.5" fill="#f3f0a2"/><rect x="985" y="543.3" width="1" height="11.1" fill="#b4b394"/><rect x="984" y="544.4" width="3.0" height="3.3" fill="#f3f0a2"/><rect x="989" y="536.7" width="1" height="12.2" fill="#b4b394"/><rect x="988.5" y="538.3" width="2.0" height="9.0" fill="#000" stroke="#f3f0a2" stroke-width="1"/><rect x="993" y="520.0" width="1" height="28.9" fill="#b4b394"/><rect x="992.5" y="521.6" width="2.0" height="16.8" fill="#000" stroke="#f3f0a2" stroke-width="1"/><rect x="997" y="521.1" width="1" height="16.7" fill="#b4b394"/><rect x="996" y="522.2" width="3.0" height="10.0" fill="#f3f0a2"/><rect x="1001" y="518.9" width="1" height="24.4" fill="#b4b394"/><rect x="1000" y="531.1" width="3.0" height="1.5" fill="#f3f0a2"/><rect x="1005" y="530.0" width="1" height="30.0" fill="#b4b394"/><rect x="1004" y="531.1" width="3.0" height="25.6" fill="#f3f0a2"/><rect x="1009" y="547.8" width="1" height="18.9" fill="#b4b394"/><rect x="1008.5" y="549.4" width="2.0" height="7.9" fill="#000" stroke="#f3f0a2" stroke-width="1"/><rect x="1013" y="522.2" width="1" height="27.8" fill="#b4b394"/><rect x="1012.5" y="523.8" width="2.0" height="24.6" fill="#000" stroke="#f3f0a2" stroke-width="1"/><rect x="1017" y="502.2" width="1" height="26.7" fill="#b4b394"/><rect x="1016.5" y="517.2" width="2.0" height="9.0" fill="#000" stroke="#f3f0a2" stroke-width="1"/><rect x="1021" y="508.9" width="1" height="16.7" fill="#b4b394"/><rect x="1020" y="516.7" width="3.0" height="1.5" fill="#f3f0a2"/>
  </svg>
</div>

<!-- tab bar -->
<div class="a" style="left:0;top:685px;width:1280px;height:1px;background:#fff"></div>
<div class="a" style="left:0;top:686px;width:1280px;height:21px;background:#f0f0f0;border-top:1px solid #6a6a6a"></div>
<div class="a" style="left:0;top:686px;width:50px;height:20px;background:#fff;border-right:1px solid #222;border-bottom:1px solid #222"></div>
<div class="t" style="left:-5px;top:690px;font-size:12.5px;color:#222">SD,M15</div>
<div class="t" style="left:60px;top:690px;font-size:12px;color:#8a8a8a;transform:scaleX(0.92);transform-origin:0 0">USDCHF,H1</div>
<div class="a" style="left:135px;top:690px;width:1px;height:13px;background:#8a8a8a"></div>
<!-- status bar -->
<div class="a" style="left:0;top:707px;width:1280px;height:13px;background:#f0f0f0;border-top:1px solid #fafafa"></div>
<div class="t" style="left:-52px;top:713.9px;font-size:12px;color:#333">For Help, press F1</div>
<div class="a" style="left:457px;top:711px;width:366px;height:9px;background:#a4a4a4;border-top:1px solid #5a5a5a;border-left:1px solid #6a6a6a"></div>
<div class="a" style="left:537px;top:712px;width:79px;height:8px;background:#000"></div>
<div class="a" style="left:507px;top:712px;width:1px;height:8px;background:#6a6a6a"></div>
<div class="a" style="left:733px;top:712px;width:1px;height:8px;background:#6a6a6a"></div>
<div class="a" style="left:763px;top:712px;width:1px;height:8px;background:#6a6a6a"></div>
<div class="a" style="left:792px;top:712px;width:1px;height:8px;background:#6a6a6a"></div>
<div class="a" style="left:516px;top:716px;width:9px;height:6px;border-radius:50%;background:#e8e8e8"></div>
<div class="t" style="left:835px;top:713px;font-size:12px;color:#222">O: 1820.28</div><div class="t" style="left:907px;top:713px;font-size:12px;color:#222">H: 1822.81</div><div class="t" style="left:977px;top:713px;font-size:12px;color:#222">L: 1820.24</div><div class="t" style="left:1045px;top:713px;font-size:12px;color:#222">C: 1822.44</div><div class="t" style="left:1118px;top:713px;font-size:12px;color:#222">V: 1547</div><div class="t" style="left:1213px;top:713px;font-size:12px;color:#222">858/5 kb</div><div class="a" style="left:828px;top:711px;width:1px;height:9px;background:#9a9a9a"></div><div class="a" style="left:901px;top:711px;width:1px;height:9px;background:#9a9a9a"></div><div class="a" style="left:973px;top:711px;width:1px;height:9px;background:#9a9a9a"></div><div class="a" style="left:1042px;top:711px;width:1px;height:9px;background:#9a9a9a"></div><div class="a" style="left:1113px;top:711px;width:1px;height:9px;background:#9a9a9a"></div><div class="a" style="left:1180px;top:711px;width:1px;height:9px;background:#9a9a9a"></div><div class="a" style="left:1186px;top:712px;width:2px;height:8px;background:#6a9a20"></div><div class="a" style="left:1189px;top:714px;width:2px;height:6px;background:#6a9a20"></div><div class="a" style="left:1192px;top:714px;width:2px;height:6px;background:#6a9a20"></div><div class="a" style="left:1195px;top:712px;width:2px;height:8px;background:#6a9a20"></div><div class="a" style="left:1198px;top:714px;width:2px;height:6px;background:#6a9a20"></div><div class="a" style="left:1201px;top:714px;width:2px;height:6px;background:#6a9a20"></div><div class="a" style="left:1204px;top:712px;width:2px;height:8px;background:#6a9a20"></div><div class="a" style="left:1207px;top:714px;width:2px;height:6px;background:#6a9a20"></div>

<!-- watermark -->
<div class="t" style="left:1039px;top:655.2px;font-size:18.7px;letter-spacing:0.6px;color:rgba(175,175,175,0.7)">Activate Windows</div>
<div class="t" style="left:1038px;top:680px;font-size:15px;color:rgba(175,175,175,0.7)">Go to Settings to activate Windows.</div>

<div class="a" style="left:0;top:719px;width:1280px;height:1px;background:#111"></div>
<!-- dialog -->
<div id="dlg" class="a"></div>
<div class="a" style="left:353px;top:169px;width:574px;height:30px;background:#fff"></div>
<div class="t" style="left:360px;top:177.4px;font-size:12px;color:#222;transform:scaleX(0.962);transform-origin:0 0">Properties of XAUUSD,M15</div>
<div class="t" style="left:855px;top:176px;font-size:13px;color:#333">?</div>
<svg class="a" style="left:898px;top:176px" width="14" height="14"><path d="M1.5 1.5 L12.5 12.5 M12.5 1.5 L1.5 12.5" stroke="#222" stroke-width="1.2"/></svg>
<!-- tabs -->
<div class="a" style="left:359px;top:226px;width:562px;height:292px;background:#fff;border:1px solid #d9d9d9"></div>
<div class="a" style="left:404px;top:208px;width:51px;height:19px;background:#f0f0f0;border:1px solid #d9d9d9;border-bottom:none"></div>
<div class="a" style="left:359px;top:206px;width:46px;height:21px;background:#fff;border:1px solid #d9d9d9;border-bottom:none"></div>
<div class="t" style="left:365px;top:211px;font-size:11.5px;color:#222;transform:scaleX(0.88);transform-origin:0 0">Colors</div>
<div class="t" style="left:408px;top:213px;font-size:11.5px;color:#222;transform:scaleX(0.88);transform-origin:0 0">Common</div>
<div class="lbl" style="left:484px;top:241px;font-size:11.5px;transform:scaleX(0.89);transform-origin:0 0">Color scheme:</div>
<div class="a" style="left:560px;top:236px;width:122px;height:21px;background:#e5f1fb;border:1.5px solid #5a8db2;border-radius:1px"></div>
<svg class="a" style="left:667px;top:244px" width="11" height="7"><path d="M1.5 1 L5.5 5 L9.5 1" fill="none" stroke="#3a4a58" stroke-width="1.2"/></svg>

<!-- preview chart -->
<div class="a" style="left:370px;top:262px;width:311px;height:245px;background:#a8a8a8"></div>
<div class="a" style="left:371px;top:263.5px;width:310px;height:243.5px;background:#000"></div>
<svg class="a" style="left:0;top:0" width="690" height="510" viewBox="0 0 690 510">
  <g stroke="#ababab" stroke-width="1" stroke-dasharray="3,3" fill="none">
    <line x1="407.5" y1="266" x2="407.5" y2="491"/><line x1="440.5" y1="266" x2="440.5" y2="491"/><line x1="472.5" y1="266" x2="472.5" y2="491"/><line x1="504.5" y1="266" x2="504.5" y2="491"/><line x1="537.5" y1="266" x2="537.5" y2="491"/><line x1="569.5" y1="266" x2="569.5" y2="491"/><line x1="601.5" y1="266" x2="601.5" y2="491"/><line x1="634.5" y1="266" x2="634.5" y2="491"/><line x1="374" y1="286.5" x2="642" y2="286.5"/><line x1="374" y1="320.5" x2="642" y2="320.5"/><line x1="374" y1="353.5" x2="642" y2="353.5"/><line x1="374" y1="387.5" x2="642" y2="387.5"/><line x1="374" y1="453.5" x2="642" y2="453.5"/><line x1="374" y1="486.5" x2="642" y2="486.5"/>
  </g>
  <rect x="373.5" y="265.5" width="269" height="226" fill="none" stroke="#dedede" stroke-width="1"/>
  <rect x="374" y="420.2" width="268" height="1.4" fill="#b6b9c0"/>
  <rect x="374" y="462" width="1.2" height="27.0" fill="#6b8f6b"/><rect x="373" y="487.5" width="3" height="1" fill="#5f7f5f"/><rect x="379" y="465.3" width="1.2" height="23.7" fill="#6b8f6b"/><rect x="378" y="487.5" width="3" height="1" fill="#5f7f5f"/><rect x="383" y="464.2" width="1.2" height="24.8" fill="#6b8f6b"/><rect x="382" y="487.5" width="3" height="1" fill="#5f7f5f"/><rect x="387" y="469.7" width="1.2" height="19.3" fill="#6b8f6b"/><rect x="386" y="487.5" width="3" height="1" fill="#5f7f5f"/><rect x="391" y="465.3" width="1.2" height="23.7" fill="#6b8f6b"/><rect x="390" y="487.5" width="3" height="1" fill="#5f7f5f"/><rect x="395" y="467.5" width="1.2" height="21.5" fill="#6b8f6b"/><rect x="394" y="487.5" width="3" height="1" fill="#5f7f5f"/><rect x="399" y="472.4" width="1.2" height="16.6" fill="#6b8f6b"/><rect x="398" y="487.5" width="3" height="1" fill="#5f7f5f"/><rect x="403" y="473.5" width="1.2" height="15.5" fill="#6b8f6b"/><rect x="402" y="487.5" width="3" height="1" fill="#5f7f5f"/><rect x="407" y="475.7" width="1.2" height="13.3" fill="#6b8f6b"/><rect x="406" y="487.5" width="3" height="1" fill="#5f7f5f"/><rect x="411" y="476.3" width="1.2" height="12.7" fill="#6b8f6b"/><rect x="410" y="487.5" width="3" height="1" fill="#5f7f5f"/><rect x="415" y="478.4" width="1.2" height="10.6" fill="#6b8f6b"/><rect x="414" y="487.5" width="3" height="1" fill="#5f7f5f"/><rect x="419" y="475.7" width="1.2" height="13.3" fill="#6b8f6b"/><rect x="418" y="487.5" width="3" height="1" fill="#5f7f5f"/><rect x="423" y="478.4" width="1.2" height="10.6" fill="#6b8f6b"/><rect x="422" y="487.5" width="3" height="1" fill="#5f7f5f"/><rect x="427" y="475.7" width="1.2" height="13.3" fill="#6b8f6b"/><rect x="426" y="487.5" width="3" height="1" fill="#5f7f5f"/><rect x="432" y="470.2" width="1.2" height="18.8" fill="#6b8f6b"/><rect x="431" y="487.5" width="3" height="1" fill="#5f7f5f"/><rect x="436" y="475.7" width="1.2" height="13.3" fill="#6b8f6b"/><rect x="435" y="487.5" width="3" height="1" fill="#5f7f5f"/><rect x="440" y="477.4" width="1.2" height="11.6" fill="#6b8f6b"/><rect x="439" y="487.5" width="3" height="1" fill="#5f7f5f"/><rect x="444" y="479.5" width="1.2" height="9.5" fill="#6b8f6b"/><rect x="443" y="487.5" width="3" height="1" fill="#5f7f5f"/><rect x="448" y="478.4" width="1.2" height="10.6" fill="#6b8f6b"/><rect x="447" y="487.5" width="3" height="1" fill="#5f7f5f"/><rect x="452" y="479.5" width="1.2" height="9.5" fill="#6b8f6b"/><rect x="451" y="487.5" width="3" height="1" fill="#5f7f5f"/><rect x="456" y="478.4" width="1.2" height="10.6" fill="#6b8f6b"/><rect x="455" y="487.5" width="3" height="1" fill="#5f7f5f"/><rect x="460" y="478.4" width="1.2" height="10.6" fill="#6b8f6b"/><rect x="459" y="487.5" width="3" height="1" fill="#5f7f5f"/><rect x="464" y="478.4" width="1.2" height="10.6" fill="#6b8f6b"/><rect x="463" y="487.5" width="3" height="1" fill="#5f7f5f"/><rect x="468" y="479.5" width="1.2" height="9.5" fill="#6b8f6b"/><rect x="467" y="487.5" width="3" height="1" fill="#5f7f5f"/><rect x="472" y="477.4" width="1.2" height="11.6" fill="#6b8f6b"/><rect x="471" y="487.5" width="3" height="1" fill="#5f7f5f"/><rect x="476" y="478" width="1.2" height="11.0" fill="#6b8f6b"/><rect x="475" y="487.5" width="3" height="1" fill="#5f7f5f"/><rect x="480" y="483.9" width="1.2" height="5.1" fill="#6b8f6b"/><rect x="479" y="487.5" width="3" height="1" fill="#5f7f5f"/><rect x="484" y="483.9" width="1.2" height="5.1" fill="#6b8f6b"/><rect x="483" y="487.5" width="3" height="1" fill="#5f7f5f"/><rect x="488" y="485" width="1.2" height="4.0" fill="#6b8f6b"/><rect x="487" y="487.5" width="3" height="1" fill="#5f7f5f"/><rect x="492" y="486.6" width="1.2" height="2.4" fill="#6b8f6b"/><rect x="491" y="487.5" width="3" height="1" fill="#5f7f5f"/><rect x="497" y="487" width="1.2" height="2.0" fill="#6b8f6b"/><rect x="496" y="487.5" width="3" height="1" fill="#5f7f5f"/><rect x="501" y="486.6" width="1.2" height="2.4" fill="#6b8f6b"/><rect x="500" y="487.5" width="3" height="1" fill="#5f7f5f"/><rect x="505" y="485" width="1.2" height="4.0" fill="#6b8f6b"/><rect x="504" y="487.5" width="3" height="1" fill="#5f7f5f"/><rect x="506" y="487" width="1.2" height="2.0" fill="#6b8f6b"/><rect x="505" y="487.5" width="3" height="1" fill="#5f7f5f"/><rect x="512" y="487" width="1.2" height="2.0" fill="#6b8f6b"/><rect x="511" y="487.5" width="3" height="1" fill="#5f7f5f"/><rect x="516" y="487" width="1.2" height="2.0" fill="#6b8f6b"/><rect x="515" y="487.5" width="3" height="1" fill="#5f7f5f"/><rect x="520" y="487" width="1.2" height="2.0" fill="#6b8f6b"/><rect x="519" y="487.5" width="3" height="1" fill="#5f7f5f"/><rect x="525" y="487" width="1.2" height="2.0" fill="#6b8f6b"/><rect x="524" y="487.5" width="3" height="1" fill="#5f7f5f"/><rect x="529" y="482.8" width="1.2" height="6.2" fill="#6b8f6b"/><rect x="528" y="487.5" width="3" height="1" fill="#5f7f5f"/><rect x="533" y="485" width="1.2" height="4.0" fill="#6b8f6b"/><rect x="532" y="487.5" width="3" height="1" fill="#5f7f5f"/><rect x="537" y="485" width="1.2" height="4.0" fill="#6b8f6b"/><rect x="536" y="487.5" width="3" height="1" fill="#5f7f5f"/><rect x="541" y="481.7" width="1.2" height="7.3" fill="#6b8f6b"/><rect x="540" y="487.5" width="3" height="1" fill="#5f7f5f"/><rect x="545" y="476.8" width="1.2" height="12.2" fill="#6b8f6b"/><rect x="544" y="487.5" width="3" height="1" fill="#5f7f5f"/><rect x="549" y="479.5" width="1.2" height="9.5" fill="#6b8f6b"/><rect x="548" y="487.5" width="3" height="1" fill="#5f7f5f"/><rect x="553" y="481.7" width="1.2" height="7.3" fill="#6b8f6b"/><rect x="552" y="487.5" width="3" height="1" fill="#5f7f5f"/><rect x="557" y="481.2" width="1.2" height="7.8" fill="#6b8f6b"/><rect x="556" y="487.5" width="3" height="1" fill="#5f7f5f"/><rect x="561" y="481.7" width="1.2" height="7.3" fill="#6b8f6b"/><rect x="560" y="487.5" width="3" height="1" fill="#5f7f5f"/><rect x="565" y="485" width="1.2" height="4.0" fill="#6b8f6b"/><rect x="564" y="487.5" width="3" height="1" fill="#5f7f5f"/><rect x="570" y="480.6" width="1.2" height="8.4" fill="#6b8f6b"/><rect x="569" y="487.5" width="3" height="1" fill="#5f7f5f"/><rect x="573" y="481.2" width="1.2" height="7.8" fill="#6b8f6b"/><rect x="572" y="487.5" width="3" height="1" fill="#5f7f5f"/><rect x="577" y="485" width="1.2" height="4.0" fill="#6b8f6b"/><rect x="576" y="487.5" width="3" height="1" fill="#5f7f5f"/><rect x="582" y="480" width="1.2" height="9.0" fill="#6b8f6b"/><rect x="581" y="487.5" width="3" height="1" fill="#5f7f5f"/><rect x="586" y="485" width="1.2" height="4.0" fill="#6b8f6b"/><rect x="585" y="487.5" width="3" height="1" fill="#5f7f5f"/><rect x="590" y="487" width="1.2" height="2.0" fill="#6b8f6b"/><rect x="589" y="487.5" width="3" height="1" fill="#5f7f5f"/><rect x="594" y="487" width="1.2" height="2.0" fill="#6b8f6b"/><rect x="593" y="487.5" width="3" height="1" fill="#5f7f5f"/><rect x="598" y="487" width="1.2" height="2.0" fill="#6b8f6b"/><rect x="597" y="487.5" width="3" height="1" fill="#5f7f5f"/><rect x="602" y="485" width="1.2" height="4.0" fill="#6b8f6b"/><rect x="601" y="487.5" width="3" height="1" fill="#5f7f5f"/><rect x="606" y="485" width="1.2" height="4.0" fill="#6b8f6b"/><rect x="605" y="487.5" width="3" height="1" fill="#5f7f5f"/><rect x="610" y="485" width="1.2" height="4.0" fill="#6b8f6b"/><rect x="609" y="487.5" width="3" height="1" fill="#5f7f5f"/><rect x="614" y="485" width="1.2" height="4.0" fill="#6b8f6b"/><rect x="613" y="487.5" width="3" height="1" fill="#5f7f5f"/><rect x="619" y="480" width="1.2" height="9.0" fill="#6b8f6b"/><rect x="618" y="487.5" width="3" height="1" fill="#5f7f5f"/><rect x="623" y="481.2" width="1.2" height="7.8" fill="#6b8f6b"/><rect x="622" y="487.5" width="3" height="1" fill="#5f7f5f"/><rect x="626" y="479.5" width="1.2" height="9.5" fill="#6b8f6b"/><rect x="625" y="487.5" width="3" height="1" fill="#5f7f5f"/><rect x="631" y="480.6" width="1.2" height="8.4" fill="#6b8f6b"/><rect x="630" y="487.5" width="3" height="1" fill="#5f7f5f"/><rect x="635" y="483.9" width="1.2" height="5.1" fill="#6b8f6b"/><rect x="634" y="487.5" width="3" height="1" fill="#5f7f5f"/><rect x="638" y="487" width="1.2" height="2.0" fill="#6b8f6b"/><rect x="637" y="487.5" width="3" height="1" fill="#5f7f5f"/>
  <rect x="374" y="277.5" width="1" height="44.7" fill="#b4b394"/><rect x="373.5" y="295.5" width="2" height="26.2" fill="#000" stroke="#f3f0a2" stroke-width="1"/><rect x="379" y="278.5" width="1" height="35.0" fill="#b4b394"/><rect x="378" y="288.2" width="3" height="6.8" fill="#f3f0a2"/><rect x="383" y="282.4" width="1" height="52.5" fill="#b4b394"/><rect x="382" y="288.2" width="3" height="34.0" fill="#f3f0a2"/><rect x="387" y="293.1" width="1" height="37.0" fill="#b4b394"/><rect x="386" y="317.4" width="3" height="2.9" fill="#f3f0a2"/><rect x="391" y="317.1" width="1" height="65.7" fill="#b4b394"/><rect x="390" y="317.1" width="3" height="61.1" fill="#f3f0a2"/><rect x="395" y="346.1" width="1" height="38.2" fill="#b4b394"/><rect x="394.5" y="348.1" width="2" height="29.6" fill="#000" stroke="#f3f0a2" stroke-width="1"/><rect x="399" y="346.1" width="1" height="42.8" fill="#b4b394"/><rect x="398" y="347.6" width="3" height="22.9" fill="#f3f0a2"/><rect x="403" y="366.0" width="1" height="27.5" fill="#b4b394"/><rect x="402" y="369.0" width="3" height="13.7" fill="#f3f0a2"/><rect x="407" y="376.7" width="1" height="36.7" fill="#b4b394"/><rect x="406" y="381.2" width="3" height="3.1" fill="#f3f0a2"/><rect x="411" y="375.1" width="1" height="33.6" fill="#b4b394"/><rect x="410" y="376.7" width="3" height="6.1" fill="#f3f0a2"/><rect x="415" y="375.1" width="1" height="47.4" fill="#b4b394"/><rect x="414" y="376.7" width="3" height="44.3" fill="#f3f0a2"/><rect x="419" y="384.3" width="1" height="42.8" fill="#b4b394"/><rect x="418" y="385.8" width="3" height="29.0" fill="#f3f0a2"/><rect x="423" y="385.8" width="1" height="30.6" fill="#b4b394"/><rect x="422" y="387.4" width="3" height="26.0" fill="#f3f0a2"/><rect x="427" y="401.1" width="1" height="18.3" fill="#b4b394"/><rect x="426.5" y="412.3" width="2" height="5.1" fill="#000" stroke="#f3f0a2" stroke-width="1"/><rect x="431" y="369.0" width="1" height="48.9" fill="#b4b394"/><rect x="430.5" y="403.1" width="2" height="12.7" fill="#000" stroke="#f3f0a2" stroke-width="1"/><rect x="435" y="384.3" width="1" height="32.1" fill="#b4b394"/><rect x="434.5" y="386.3" width="2" height="28.0" fill="#000" stroke="#f3f0a2" stroke-width="1"/><rect x="439" y="372.1" width="1" height="26.0" fill="#b4b394"/><rect x="438" y="376.7" width="3" height="19.9" fill="#f3f0a2"/><rect x="443" y="375.1" width="1" height="26.0" fill="#b4b394"/><rect x="442" y="376.7" width="3" height="21.4" fill="#f3f0a2"/><rect x="448" y="393.5" width="1" height="22.9" fill="#b4b394"/><rect x="447" y="395.0" width="3" height="3.1" fill="#f3f0a2"/><rect x="452" y="395.0" width="1" height="13.7" fill="#b4b394"/><rect x="451.5" y="397.0" width="2" height="6.6" fill="#000" stroke="#f3f0a2" stroke-width="1"/><rect x="456" y="388.9" width="1" height="21.4" fill="#b4b394"/><rect x="455" y="398.1" width="3" height="3.1" fill="#f3f0a2"/><rect x="460" y="399.6" width="1" height="21.4" fill="#b4b394"/><rect x="459" y="402.6" width="3" height="9.2" fill="#f3f0a2"/><rect x="464" y="404.2" width="1" height="12.2" fill="#b4b394"/><rect x="463" y="405.7" width="3" height="9.2" fill="#f3f0a2"/><rect x="468" y="405.7" width="1" height="18.3" fill="#b4b394"/><rect x="467" y="411.8" width="3" height="10.7" fill="#f3f0a2"/><rect x="472" y="410.3" width="1" height="12.2" fill="#b4b394"/><rect x="471" y="417.9" width="3" height="3.1" fill="#f3f0a2"/><rect x="476" y="404.2" width="1" height="19.9" fill="#b4b394"/><rect x="475" y="417.9" width="3" height="3.1" fill="#f3f0a2"/><rect x="480" y="413.3" width="1" height="27.5" fill="#b4b394"/><rect x="479" y="421.0" width="3" height="18.3" fill="#f3f0a2"/><rect x="484" y="437.8" width="1" height="45.8" fill="#b4b394"/><rect x="483" y="439.3" width="3" height="22.9" fill="#f3f0a2"/><rect x="488" y="459.2" width="1" height="26.0" fill="#b4b394"/><rect x="487.5" y="461.2" width="2" height="12.7" fill="#000" stroke="#f3f0a2" stroke-width="1"/><rect x="492" y="454.6" width="1" height="22.9" fill="#b4b394"/><rect x="491.5" y="456.6" width="2" height="18.9" fill="#000" stroke="#f3f0a2" stroke-width="1"/><rect x="497" y="456.1" width="1" height="15.3" fill="#b4b394"/><rect x="496.5" y="462.7" width="2" height="5.1" fill="#000" stroke="#f3f0a2" stroke-width="1"/><rect x="501" y="446.9" width="1" height="19.9" fill="#b4b394"/><rect x="500.5" y="449.0" width="2" height="15.8" fill="#000" stroke="#f3f0a2" stroke-width="1"/><rect x="505" y="445.4" width="1" height="16.8" fill="#b4b394"/><rect x="504" y="446.9" width="3" height="6.1" fill="#f3f0a2"/><rect x="509" y="443.9" width="1" height="15.3" fill="#b4b394"/><rect x="508.5" y="445.9" width="2" height="11.2" fill="#000" stroke="#f3f0a2" stroke-width="1"/><rect x="513" y="442.4" width="1" height="10.7" fill="#b4b394"/><rect x="512" y="446.9" width="3" height="3.1" fill="#f3f0a2"/><rect x="517" y="443.9" width="1" height="9.2" fill="#b4b394"/><rect x="516.5" y="445.9" width="2" height="5.1" fill="#000" stroke="#f3f0a2" stroke-width="1"/><rect x="521" y="437.8" width="1" height="9.2" fill="#b4b394"/><rect x="520.5" y="439.8" width="2" height="5.1" fill="#000" stroke="#f3f0a2" stroke-width="1"/><rect x="525" y="437.8" width="1" height="12.2" fill="#b4b394"/><rect x="524" y="439.3" width="3" height="3.1" fill="#f3f0a2"/><rect x="529" y="439.3" width="1" height="45.8" fill="#b4b394"/><rect x="528" y="440.8" width="3" height="36.7" fill="#f3f0a2"/><rect x="533" y="471.4" width="1" height="12.2" fill="#b4b394"/><rect x="532.5" y="473.4" width="2" height="5.1" fill="#000" stroke="#f3f0a2" stroke-width="1"/><rect x="537" y="446.9" width="1" height="29.0" fill="#b4b394"/><rect x="536.5" y="450.5" width="2" height="23.4" fill="#000" stroke="#f3f0a2" stroke-width="1"/><rect x="541" y="428.6" width="1" height="22.9" fill="#b4b394"/><rect x="540.5" y="430.6" width="2" height="18.9" fill="#000" stroke="#f3f0a2" stroke-width="1"/><rect x="545" y="414.9" width="1" height="21.4" fill="#b4b394"/><rect x="544.5" y="421.5" width="2" height="9.7" fill="#000" stroke="#f3f0a2" stroke-width="1"/><rect x="549" y="398.1" width="1" height="24.4" fill="#b4b394"/><rect x="548.5" y="400.1" width="2" height="20.4" fill="#000" stroke="#f3f0a2" stroke-width="1"/><rect x="553" y="388.9" width="1" height="16.8" fill="#b4b394"/><rect x="552.5" y="390.9" width="2" height="9.7" fill="#000" stroke="#f3f0a2" stroke-width="1"/><rect x="558" y="388.9" width="1" height="22.9" fill="#b4b394"/><rect x="557" y="390.4" width="3" height="9.2" fill="#f3f0a2"/><rect x="562" y="395.0" width="1" height="15.3" fill="#b4b394"/><rect x="561" y="398.1" width="3" height="3.1" fill="#f3f0a2"/><rect x="566" y="396.5" width="1" height="9.2" fill="#b4b394"/><rect x="565" y="399.6" width="3" height="1.5" fill="#f3f0a2"/><rect x="570" y="393.5" width="1" height="22.9" fill="#b4b394"/><rect x="569" y="399.6" width="3" height="12.2" fill="#f3f0a2"/><rect x="574" y="408.7" width="1" height="22.9" fill="#b4b394"/><rect x="573" y="410.3" width="3" height="10.7" fill="#f3f0a2"/><rect x="578" y="416.4" width="1" height="16.8" fill="#b4b394"/><rect x="577" y="417.9" width="3" height="13.7" fill="#f3f0a2"/><rect x="582" y="430.1" width="1" height="21.4" fill="#b4b394"/><rect x="581" y="431.7" width="3" height="12.2" fill="#f3f0a2"/><rect x="586" y="437.8" width="1" height="9.2" fill="#b4b394"/><rect x="585.5" y="439.8" width="2" height="5.1" fill="#000" stroke="#f3f0a2" stroke-width="1"/><rect x="590" y="437.8" width="1" height="10.7" fill="#b4b394"/><rect x="589" y="439.3" width="3" height="4.6" fill="#f3f0a2"/><rect x="594" y="440.8" width="1" height="10.7" fill="#b4b394"/><rect x="593" y="442.4" width="3" height="3.1" fill="#f3f0a2"/><rect x="598" y="440.8" width="1" height="7.6" fill="#b4b394"/><rect x="597" y="442.4" width="3" height="1.5" fill="#f3f0a2"/><rect x="602" y="436.2" width="1" height="10.7" fill="#b4b394"/><rect x="601.5" y="438.3" width="2" height="5.1" fill="#000" stroke="#f3f0a2" stroke-width="1"/><rect x="607" y="425.5" width="1" height="15.3" fill="#b4b394"/><rect x="606.5" y="427.6" width="2" height="11.2" fill="#000" stroke="#f3f0a2" stroke-width="1"/><rect x="611" y="424.0" width="1" height="13.7" fill="#b4b394"/><rect x="610" y="425.5" width="3" height="7.6" fill="#f3f0a2"/><rect x="615" y="424.0" width="1" height="18.3" fill="#b4b394"/><rect x="614" y="431.7" width="3" height="1.5" fill="#f3f0a2"/><rect x="619" y="430.1" width="1" height="21.4" fill="#b4b394"/><rect x="618" y="431.7" width="3" height="18.3" fill="#f3f0a2"/><rect x="623" y="443.9" width="1" height="13.7" fill="#b4b394"/><rect x="622.5" y="445.9" width="2" height="3.6" fill="#000" stroke="#f3f0a2" stroke-width="1"/><rect x="627" y="425.5" width="1" height="21.4" fill="#b4b394"/><rect x="626.5" y="427.6" width="2" height="17.3" fill="#000" stroke="#f3f0a2" stroke-width="1"/><rect x="631" y="411.8" width="1" height="18.3" fill="#b4b394"/><rect x="630.5" y="421.5" width="2" height="6.6" fill="#000" stroke="#f3f0a2" stroke-width="1"/><rect x="635" y="416.4" width="1" height="10.7" fill="#b4b394"/><rect x="634" y="421.0" width="3" height="1.5" fill="#f3f0a2"/>
  <rect x="374" y="491" width="1" height="3" fill="#dedede"/><rect x="439" y="491" width="1" height="3" fill="#dedede"/><rect x="504" y="491" width="1" height="3" fill="#dedede"/><rect x="569" y="491" width="1" height="3" fill="#dedede"/><rect x="634" y="491" width="1" height="3" fill="#dedede"/><rect x="642" y="286" width="3" height="1" fill="#dedede"/><rect x="642" y="320" width="3" height="1" fill="#dedede"/><rect x="642" y="353" width="3" height="1" fill="#dedede"/><rect x="642" y="387" width="3" height="1" fill="#dedede"/><rect x="642" y="420" width="3" height="1" fill="#dedede"/><rect x="642" y="453" width="3" height="1" fill="#dedede"/><rect x="642" y="486" width="3" height="1" fill="#dedede"/>
</svg>
<div class="t" style="left:389px;top:268px;font-size:9.5px;color:#f2f2f2">XAUUSD,M15  1819.68 1820.28 1819.10 1819.72</div>
<div class="a" style="left:371px;top:263px;width:310px;height:244px;overflow:hidden">
<div class="pl" style="left:277px;top:19px">1833.70</div>
<div class="pl" style="left:277px;top:53px">1830.20</div>
<div class="pl" style="left:277px;top:86px">1826.80</div>
<div class="pl" style="left:277px;top:120px">1823.30</div>
<div class="a" style="left:272px;top:153px;width:39px;height:11px;background:#fff"></div>
<div class="pl" style="left:277px;top:154px;color:#111">1819.72</div>
<div class="pl" style="left:277px;top:187px">1816.40</div>
<div class="pl" style="left:277px;top:220px">1813.00</div>
</div>
<div style="position:absolute;left:371px;top:490px;width:310px;height:17px;overflow:hidden">
  <div class="ptl" style="left:2px;top:5px">12 May 16:30</div>
  <div class="ptl" style="left:67px;top:5px">12 May 20:30</div>
  <div class="ptl" style="left:132px;top:5px">13 May 01:30</div>
  <div class="ptl" style="left:197px;top:5px">13 May 05:30</div>
  <div class="ptl" style="left:262px;top:5px">13 May 09:30</div>
</div>


<!-- right side color rows -->
<div class="lbl" style="left:580.5px;width:200px;top:240.8px">Background:</div><div class="dd" style="top:236.5px"><div class="sw" style="background:#000000"></div><div class="ddt">Black</div><svg class="chev" width="10" height="6"><path d="M1 0.8 L5 4.8 L9 0.8" fill="none" stroke="#333" stroke-width="1.1"/></svg></div><div class="lbl" style="left:580.5px;width:200px;top:265.6px">Foreground:</div><div class="dd" style="top:261.2px"><div class="sw" style="background:#ffffff"></div><div class="ddt">White</div><svg class="chev" width="10" height="6"><path d="M1 0.8 L5 4.8 L9 0.8" fill="none" stroke="#333" stroke-width="1.1"/></svg></div><div class="lbl" style="left:580.5px;width:200px;top:290.3px">Grid:</div><div class="dd" style="top:286.0px"><div class="sw" style="background:#778899"></div><div class="ddt">LightSlateGray</div><svg class="chev" width="10" height="6"><path d="M1 0.8 L5 4.8 L9 0.8" fill="none" stroke="#333" stroke-width="1.1"/></svg></div><div class="lbl" style="left:580.5px;width:200px;top:315.1px">Bar Up:</div><div class="dd" style="top:310.8px"><div class="sw" style="background:#ffff00"></div><div class="ddt">Yellow</div><svg class="chev" width="10" height="6"><path d="M1 0.8 L5 4.8 L9 0.8" fill="none" stroke="#333" stroke-width="1.1"/></svg></div><div class="lbl" style="left:580.5px;width:200px;top:339.8px">Bar Down:</div><div class="dd" style="top:335.5px"><div class="sw" style="background:#ffff00"></div><div class="ddt">Yellow</div><svg class="chev" width="10" height="6"><path d="M1 0.8 L5 4.8 L9 0.8" fill="none" stroke="#333" stroke-width="1.1"/></svg></div><div class="lbl" style="left:580.5px;width:200px;top:364.6px">Bull candle:</div><div class="dd" style="top:360.2px"><div class="sw" style="background:#000000"></div><div class="ddt">Black</div><svg class="chev" width="10" height="6"><path d="M1 0.8 L5 4.8 L9 0.8" fill="none" stroke="#333" stroke-width="1.1"/></svg></div><div class="lbl" style="left:580.5px;width:200px;top:389.3px">Bear candle:</div><div class="dd" style="top:385.0px"><div class="sw" style="background:#ffffff"></div><div class="ddt">White</div><svg class="chev" width="10" height="6"><path d="M1 0.8 L5 4.8 L9 0.8" fill="none" stroke="#333" stroke-width="1.1"/></svg></div><div class="lbl" style="left:580.5px;width:200px;top:414.1px">Line graph:</div><div class="dd" style="top:409.8px"><div class="sw" style="background:#ffff00"></div><div class="ddt">Yellow</div><svg class="chev" width="10" height="6"><path d="M1 0.8 L5 4.8 L9 0.8" fill="none" stroke="#333" stroke-width="1.1"/></svg></div><div class="lbl" style="left:580.5px;width:200px;top:438.8px">Volumes:</div><div class="dd" style="top:434.5px"><div class="sw" style="background:#32cd32"></div><div class="ddt">LimeGreen</div><svg class="chev" width="10" height="6"><path d="M1 0.8 L5 4.8 L9 0.8" fill="none" stroke="#333" stroke-width="1.1"/></svg></div><div class="lbl" style="left:580.5px;width:200px;top:463.6px">Ask line:</div><div class="dd" style="top:459.2px"><div class="sw" style="background:#ff0000"></div><div class="ddt">Red</div><svg class="chev" width="10" height="6"><path d="M1 0.8 L5 4.8 L9 0.8" fill="none" stroke="#333" stroke-width="1.1"/></svg></div><div class="lbl" style="left:580.5px;width:200px;top:488.3px">Stop levels:</div><div class="dd" style="top:484.0px"><div class="sw" style="background:#ff0000"></div><div class="ddt">Red</div><svg class="chev" width="10" height="6"><path d="M1 0.8 L5 4.8 L9 0.8" fill="none" stroke="#333" stroke-width="1.1"/></svg></div>

<!-- buttons -->
<div class="btn" style="left:683px;border:2px solid #3c84c4;line-height:17px">OK</div>
<div class="btn" style="left:765px">Cancel</div>
<div class="btn" style="left:847px">Reset</div>

<!-- cursor -->
<svg class="a" style="left:663px;top:249px" width="14" height="21" viewBox="0 0 14 21"><path d="M0.5 0.5 L0.5 16 L4.2 12.6 L6.8 18.6 L9 17.6 L6.5 11.8 L11.5 11.8 Z" fill="#fff" stroke="#000" stroke-width="1"/></svg>
</div></body></html>
